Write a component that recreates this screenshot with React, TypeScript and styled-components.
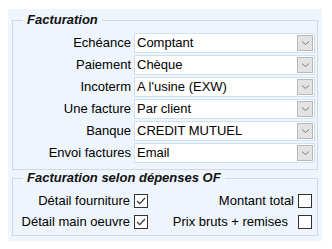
import React from 'react'
import styled, { createGlobalStyle } from 'styled-components'

const GlobalStyle = createGlobalStyle`
  body {
    margin: 0;
    background: #ffffff;
    font-family: 'Liberation Sans', Arial, sans-serif;
    font-size: 13px;
    color: #000;
  }
`

const Panel = styled.div`
  margin: 9px 0 0 8px;
  width: 314px;
  height: 232px;
  box-sizing: border-box;
  background: #eef5fc;
  padding: 3px 4px 0 4px;
  display: flex;
  flex-direction: column;
`

const Group = styled.fieldset`
  margin: 0;
  padding: 5px 2px 6px 0;
  border: 1px solid #d3d9df;
  min-width: 0;
`

const Legend = styled.legend`
  margin-left: 10px;
  padding: 0 4px;
  font-weight: bold;
  font-style: italic;
  font-size: 13px;
  line-height: 16px;
  color: #111;
`

const FormGrid = styled.div`
  display: grid;
  grid-template-columns: 118px 1fr;
  column-gap: 3px;
  row-gap: 2px;
  align-items: center;
`

const Label = styled.div`
  text-align: right;
  white-space: nowrap;
  line-height: 20px;
`

const SelectBox = styled.div`
  height: 20px;
  box-sizing: border-box;
  background: #fff;
  border: 1px solid #cfe0ee;
  display: flex;
  align-items: center;
  padding-left: 2px;
`

const SelectText = styled.span`
  flex: 1;
  white-space: nowrap;
  line-height: 18px;
`

const DropButton = styled.div`
  width: 16px;
  height: 16px;
  margin-right: 1px;
  box-sizing: border-box;
  background: #e3e3e3;
  border: 1px solid #b9b9b9;
  display: flex;
  align-items: center;
  justify-content: center;
`

const SecondGroup = styled(Group)`
  margin-top: 0;
  padding-bottom: 5px;
`

const CheckGrid = styled.div`
  display: grid;
  grid-template-columns: 135px 1fr;
  row-gap: 5px;
  padding: 2px 3px 0 0;
`

const CheckCell = styled.label<{ $gap?: number }>`
  display: flex;
  align-items: center;
  justify-content: flex-end;
  gap: ${p => p.$gap ?? 4}px;
  white-space: nowrap;
  line-height: 16px;
`

const Box = styled.span`
  width: 14px;
  height: 14px;
  box-sizing: border-box;
  border: 1px solid #333;
  background: #fff;
  display: inline-flex;
  align-items: center;
  justify-content: center;
`

function Chevron() {
  return (
    <svg width="9" height="6" viewBox="0 0 9 6">
      <path d="M1 1.5 L4.5 4.5 L8 1.5" fill="none" stroke="#7a7a7a" strokeWidth="1" />
    </svg>
  )
}

function Select({ value }: { value: string }) {
  return (
    <SelectBox>
      <SelectText>{value}</SelectText>
      <DropButton>
        <Chevron />
      </DropButton>
    </SelectBox>
  )
}

function Check({ checked }: { checked?: boolean }) {
  return (
    <Box>
      {checked && (
        <svg width="12" height="12" viewBox="0 0 12 12">
          <path d="M2 6 L4.7 8.7 L10 3" fill="none" stroke="#333" strokeWidth="1.2" />
        </svg>
      )}
    </Box>
  )
}

const fields = [
  ['Echéance', 'Comptant'],
  ['Paiement', 'Chèque'],
  ['Incoterm', "A l'usine (EXW)"],
  ['Une facture', 'Par client'],
  ['Banque', 'CREDIT MUTUEL'],
  ['Envoi factures', 'Email'],
]

export default function App() {
  return (
    <>
      <GlobalStyle />
      <Panel>
        <Group>
          <Legend>Facturation</Legend>
          <FormGrid>
            {fields.map(([label, value]) => (
              <React.Fragment key={label}>
                <Label>{label}</Label>
                <Select value={value} />
              </React.Fragment>
            ))}
          </FormGrid>
        </Group>
        <SecondGroup>
          <Legend>Facturation selon dépenses OF</Legend>
          <CheckGrid>
            <CheckCell>
              Détail fourniture <Check checked />
            </CheckCell>
            <CheckCell>
              Montant total <Check />
            </CheckCell>
            <CheckCell>
              Détail main oeuvre <Check checked />
            </CheckCell>
            <CheckCell $gap={10}>
              Prix bruts + remises <Check />
            </CheckCell>
          </CheckGrid>
        </SecondGroup>
      </Panel>
    </>
  )
}
